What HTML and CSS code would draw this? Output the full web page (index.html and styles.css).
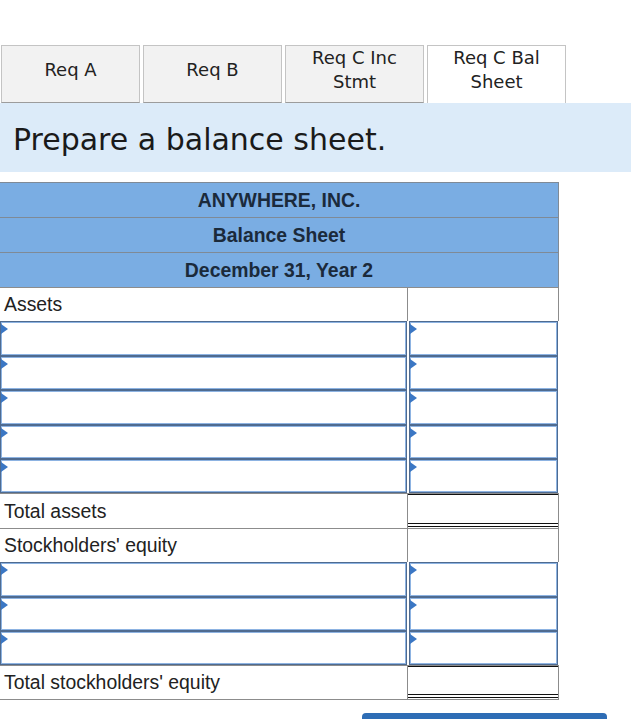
FILE: index.html
```html
<!DOCTYPE html>
<html>
<head>
<meta charset="utf-8">
<link rel="stylesheet" href="styles.css">
</head>
<body>
<div class="page">
  <div class="tabs">
    <div class="tab">Req A</div>
    <div class="tab">Req B</div>
    <div class="tab">Req C Inc<br>Stmt</div>
    <div class="tab active">Req C Bal<br>Sheet</div>
  </div>
  <div class="band">Prepare a balance sheet.</div>
  <div class="sheet">
    <div class="head">ANYWHERE, INC.</div>
    <div class="head">Balance Sheet</div>
    <div class="head">December 31, Year 2</div>

    <div class="row"><div class="label">Assets</div><div class="amt"></div></div>
    <div class="row in"><div class="box wide"><span class="flag"></span></div><div class="box narrow"><span class="flag"></span></div></div>
    <div class="row in"><div class="box wide"><span class="flag"></span></div><div class="box narrow"><span class="flag"></span></div></div>
    <div class="row in"><div class="box wide"><span class="flag"></span></div><div class="box narrow"><span class="flag"></span></div></div>
    <div class="row in"><div class="box wide"><span class="flag"></span></div><div class="box narrow"><span class="flag"></span></div></div>
    <div class="row in"><div class="box wide"><span class="flag"></span></div><div class="box narrow"><span class="flag"></span></div></div>
    <div class="row"><div class="label">Total assets</div><div class="amt"><div class="total"></div></div></div>
    <div class="row"><div class="label">Stockholders' equity</div><div class="amt"></div></div>
    <div class="row in"><div class="box wide"><span class="flag"></span></div><div class="box narrow"><span class="flag"></span></div></div>
    <div class="row in"><div class="box wide"><span class="flag"></span></div><div class="box narrow"><span class="flag"></span></div></div>
    <div class="row in"><div class="box wide"><span class="flag"></span></div><div class="box narrow"><span class="flag"></span></div></div>
    <div class="row"><div class="label">Total stockholders' equity</div><div class="amt"><div class="total"></div></div></div>
  </div>
  <div class="actions"><div class="btn"></div></div>
</div>
</body>
</html>
```
FILE: styles.css
```css
html, body {
  margin: 0;
  padding: 0;
  background: #ffffff;
}
.page {
  width: 631px;
  height: 719px;
  overflow: hidden;
  padding-top: 45px;
  box-sizing: border-box;
}
.tabs {
  display: flex;
  gap: 3px;
  padding-left: 1px;
  height: 58px;
}
.tab {
  width: 139px;
  box-sizing: border-box;
  border: 1px solid #c4c4c4;
  border-bottom: 1px solid #9c9c9c;
  background: #f2f2f2;
  display: flex;
  align-items: center;
  justify-content: center;
  text-align: center;
  padding-bottom: 9px;
  font-family: "DejaVu Sans", Verdana, sans-serif;
  font-size: 18px;
  line-height: 24px;
  color: #222;
}
.tab.active {
  background: #ffffff;
  border-bottom: none;
}
.band {
  height: 69px;
  box-sizing: border-box;
  background: #dcebf9;
  display: flex;
  align-items: center;
  padding-left: 13px;
  padding-top: 3px;
  font-family: "DejaVu Sans", Verdana, sans-serif;
  font-size: 30px;
  color: #1a1a1a;
  margin-bottom: 10px;
}
.sheet {
  width: 559px;
  font-family: "Liberation Sans", Arial, sans-serif;
}
.head {
  height: 35px;
  box-sizing: border-box;
  border-top: 1px solid #7f8a96;
  border-right: 1px solid #7f8a96;
  background: #7aade3;
  display: flex;
  align-items: center;
  justify-content: center;
  font-weight: bold;
  font-size: 19.4px;
  color: #1b2a3b;
}
.row {
  display: flex;
  height: 34.4px;
}
.label {
  width: 407px;
  box-sizing: border-box;
  border-top: 1px solid #8c8c8c;
  padding-left: 4px;
  display: flex;
  align-items: center;
  font-size: 19.4px;
  color: #222;
}
.amt {
  width: 152px;
  box-sizing: border-box;
  border-top: 1px solid #8c8c8c;
  border-left: 1px solid #8c8c8c;
  border-right: 1px solid #8c8c8c;
  display: flex;
}
.row:last-child .label,
.row:last-child .amt {
  border-bottom: 1px solid #8c8c8c;
}
.total {
  flex: 1;
  border-top: 1px solid #111;
  border-bottom: 4px double #111;
  margin-bottom: 1px;
}
.box {
  position: relative;
  box-sizing: border-box;
  border: 1px solid #4f6b90;
  box-shadow: inset 0 0 0 1px #8db3e2;
  background: #fff;
}
.box.wide {
  width: 407px;
}
.box.narrow {
  width: 149px;
  margin-left: 2px;
}
.flag {
  position: absolute;
  top: 2px;
  left: 0;
  width: 0;
  height: 0;
  border-left: 7px solid #3b77c4;
  border-top: 5px solid transparent;
  border-bottom: 5px solid transparent;
}
.actions {
  display: flex;
  padding-left: 362px;
  margin-top: 13px;
}
.btn {
  width: 245px;
  height: 30px;
  background: #2e6db5;
  border-radius: 4px 4px 0 0;
}
```
